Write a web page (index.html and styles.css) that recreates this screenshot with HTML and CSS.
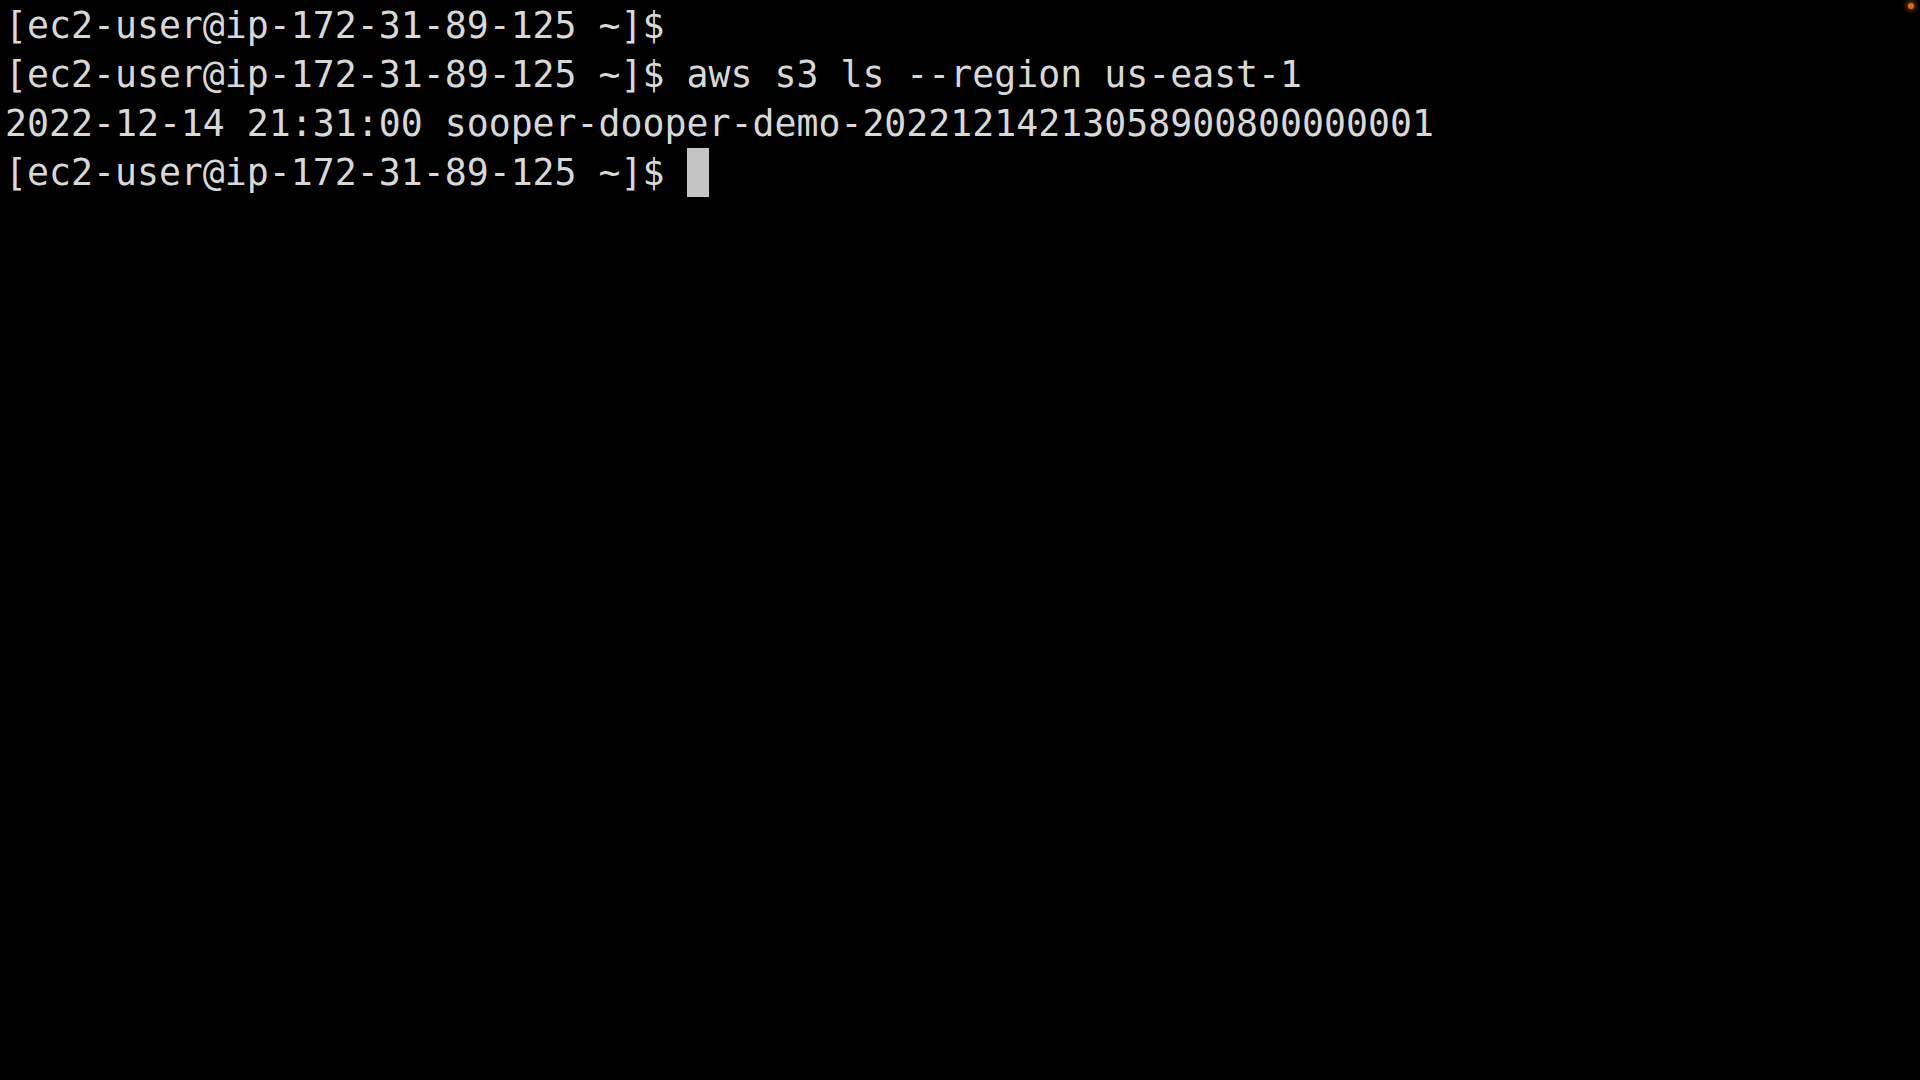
FILE: index.html
```html
<!DOCTYPE html>
<html lang="en">
<head>
<meta charset="utf-8">
<title>Terminal</title>
<link rel="stylesheet" href="styles.css">
</head>
<body>
<div class="term">
<pre class="screen">[ec2-user@ip-172-31-89-125 ~]$
[ec2-user@ip-172-31-89-125 ~]$ aws s3 ls --region us-east-1
2022-12-14 21:31:00 sooper-dooper-demo-20221214213058900800000001
[ec2-user@ip-172-31-89-125 ~]$ <span class="cursor"> </span></pre>
<span class="dot"></span>
</div>
</body>
</html>
```
FILE: styles.css
```css
html, body {
  margin: 0;
  padding: 0;
  background: #000;
  width: 100%;
  height: 100%;
  overflow: hidden;
}
.term {
  position: relative;
  width: 1920px;
  height: 1080px;
  background: #000;
}
.screen {
  margin: 0;
  padding: 1px 0 0 5px;
  font-family: "DejaVu Sans Mono", "Liberation Mono", monospace;
  font-size: 36.52px;
  line-height: 49px;
  color: #d8d8d8;
  white-space: pre;
}
.cursor {
  display: inline-block;
  width: 22px;
  height: 49px;
  vertical-align: top;
  background: #c4c4c4;
}
.dot {
  position: absolute;
  top: 3px;
  right: 6px;
  width: 6px;
  height: 6px;
  border-radius: 50%;
  background: #d06a20;
  box-shadow: 0 0 4px 2px rgba(190, 90, 20, 0.6);
}
```
